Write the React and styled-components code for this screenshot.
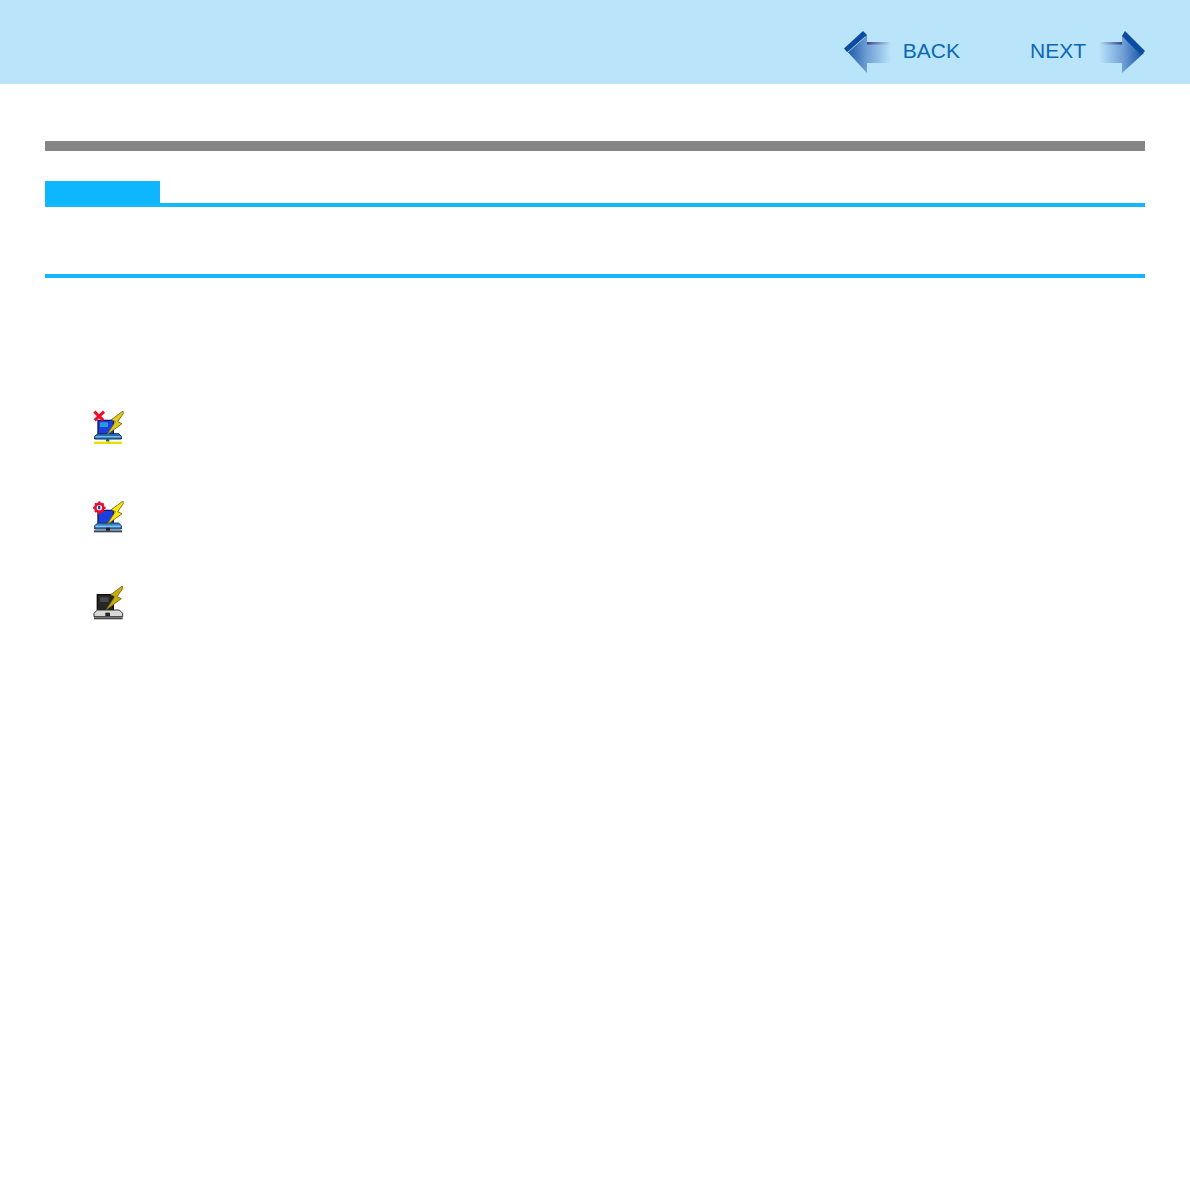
import styled, { createGlobalStyle } from 'styled-components';

const GlobalStyle = createGlobalStyle`
    html, body {
        margin: 0;
        padding: 0;
        background: #ffffff;
        font-family: 'Liberation Sans', Arial, sans-serif;
    }
`;

const Page = styled.div`
    width: 1190px;
    height: 1196px;
    overflow: hidden;
    background: #ffffff;
`;

const Header = styled.header`
    height: 84px;
    background: #bae4fa;
    display: flex;
    justify-content: flex-end;
    align-items: flex-start;
    padding: 31px 45px 0 0;
    box-sizing: border-box;
`;

const NavLink = styled.a`
    display: flex;
    align-items: flex-start;
    height: 43px;
    margin-left: ${(props) => props.$gap || 0}px;
    color: #0a69b5;
    font-size: 21px;
    line-height: 40px;
    cursor: pointer;
    svg {
        display: block;
    }
`;

const BackLabel = styled.span`
    margin-left: 12px;
`;

const NextLabel = styled.span`
    margin-right: 13px;
`;

const Content = styled.main`
    padding: 57px 45px 0;
`;

const TitleBar = styled.div`
    height: 10px;
    background: #858585;
`;

const NoteHead = styled.div`
    margin-top: 30px;
    height: 26px;
    box-sizing: border-box;
    border-bottom: 4px solid #14b7fb;
`;

const NoteTab = styled.div`
    width: 115px;
    height: 22px;
    background: #0db6ff;
`;

const NoteBody = styled.div`
    height: 71px;
    box-sizing: border-box;
    border-bottom: 4px solid #14b7fb;
`;

const IconList = styled.ul`
    list-style: none;
    margin: 132px 0 0;
    padding: 0 0 0 47px;
    display: flex;
    flex-direction: column;
    gap: 52px;
`;

const IconRow = styled.li`
    height: 36px;
    svg {
        display: block;
    }
`;

const BackArrow = () => (
    <svg width="47" height="43" viewBox="0 0 47 43">
        <defs>
            <linearGradient id="backFill" x1="0" x2="1" y1="0" y2="0">
                <stop offset="0" stopColor="#0e4fa3" />
                <stop offset="0.45" stopColor="#6a9ad2" />
                <stop offset="1" stopColor="#bae4fa" />
            </linearGradient>
            <linearGradient id="backEdge" x1="0" x2="1" y1="0" y2="0">
                <stop offset="0" stopColor="#3a3f8f" />
                <stop offset="1" stopColor="#bae4fa" />
            </linearGradient>
        </defs>
        <path d="M1 18 L23 4 L23 11 L47 11 L47 32 L23 32 L23 42 Z" fill="url(#backFill)" />
        <rect x="23" y="11" width="24" height="2.5" fill="url(#backEdge)" />
        <path d="M0 17.5 L19 0 L23 4 L3 21 Z" fill="#0b4ca2" />
        <path d="M4 21 L21 6" stroke="#d5e8f7" strokeWidth="0.7" />
    </svg>
);

const NextArrow = () => (
    <svg width="46" height="43" viewBox="0 0 46 43">
        <defs>
            <linearGradient id="nextFill" x1="0" x2="1" y1="0" y2="0">
                <stop offset="0" stopColor="#bae4fa" />
                <stop offset="0.55" stopColor="#6d9dd3" />
                <stop offset="1" stopColor="#0e4fa3" />
            </linearGradient>
            <linearGradient id="nextEdge" x1="0" x2="1" y1="0" y2="0">
                <stop offset="0" stopColor="#bae4fa" />
                <stop offset="1" stopColor="#3a3f8f" />
            </linearGradient>
        </defs>
        <path d="M0 11 L23 11 L23 4 L45 22 L23 42 L23 32 L0 32 Z" fill="url(#nextFill)" />
        <rect x="0" y="11" width="23" height="2.5" fill="url(#nextEdge)" />
        <path d="M26 0 L46 20 L42 24 L23 5 Z" fill="#0b4ca2" />
    </svg>
);

// laptop, lightning and status badge, drawn on a 3x grid then softened like the scaled bitmap
const Soft = ({ id, top, children }) => (
    <svg width="32" height="36" viewBox={`20 ${top} 96 108`}>
        <defs>
            <filter id={id} x="-10%" y="-10%" width="120%" height="120%">
                <feGaussianBlur stdDeviation="1.8" />
            </filter>
        </defs>
        <g filter={`url(#${id})`}>{children}</g>
    </svg>
);

const Bolt = ({ fill }) => (
    <path d="M113 18 L78 44 L90 50 L64 90 L110 56 L97 50 L114 26 Z" fill={fill} stroke="#6a6414" strokeWidth="2.5" />
);

const OffIcon = () => (
    <Soft id="softOff" top={15}>
        <path d="M38 46 H84 V86 H38 Z" fill="#1f3fe0" stroke="#15155c" strokeWidth="4" />
        <path d="M44 52 H68 V66 H44 Z" fill="#2a9ae0" />
        <path d="M28 94 L38 86 H100 L108 94 V102 H28 Z" fill="#1f6fc0" stroke="#0e2f66" strokeWidth="3" />
        <rect x="30" y="94" width="76" height="3" fill="#a8d8f0" />
        <rect x="62" y="102" width="10" height="8" fill="#1c6a5c" />
        <rect x="26" y="110" width="84" height="7" fill="#e6e000" />
        <path d="M27 20 L54 46 M56 20 L28 46" stroke="#f01028" strokeWidth="9" />
        <Bolt fill="#e0c81c" />
    </Soft>
);

const ChargingIcon = () => (
    <Soft id="softCharging" top={9}>
        <path d="M38 46 H84 V86 H38 Z" fill="#1f3fe0" stroke="#15155c" strokeWidth="4" />
        <path d="M28 92 L38 84 H100 L108 92 V102 H28 Z" fill="#2f7fc8" stroke="#123a66" strokeWidth="3" />
        <rect x="30" y="92" width="76" height="3" fill="#b6dcf0" />
        <rect x="62" y="98" width="12" height="10" fill="#222222" />
        <rect x="26" y="106" width="84" height="6" fill="#3d4a55" />
        <circle cx="42" cy="38" r="12" fill="#ffffff" stroke="#e8102a" strokeWidth="8" />
        <path d="M42 19 V25 M42 51 V57 M23 38 H29 M55 38 H61 M29 25 L33 29 M55 25 L51 29 M29 51 L33 47 M55 51 L51 47" stroke="#e8102a" strokeWidth="6" />
        <rect x="38" y="32" width="7" height="11" fill="#2b3fb0" />
        <Bolt fill="#ffe410" />
    </Soft>
);

const IdleIcon = () => (
    <Soft id="softIdle" top={12}>
        <path d="M36 38 H84 V82 H36 Z" fill="#262626" stroke="#111111" strokeWidth="4" />
        <path d="M44 46 H70 V60 H44 Z" fill="#4a4a4a" />
        <path d="M26 94 L36 84 H102 L112 94 V104 H26 Z" fill="#d8d8d8" stroke="#333333" strokeWidth="3" />
        <rect x="60" y="92" width="14" height="10" fill="#222222" />
        <rect x="26" y="106" width="86" height="6" fill="#4a4a4a" />
        <g transform="translate(-2 -6)">
            <Bolt fill="#c8ac10" />
        </g>
    </Soft>
);

const App = () => {
    return (
        <Page>
            <GlobalStyle />
            <Header>
                <NavLink>
                    <BackArrow />
                    <BackLabel>BACK</BackLabel>
                </NavLink>
                <NavLink $gap={70}>
                    <NextLabel>NEXT</NextLabel>
                    <NextArrow />
                </NavLink>
            </Header>
            <Content>
                <TitleBar />
                <NoteHead>
                    <NoteTab />
                </NoteHead>
                <NoteBody />
                <IconList>
                    <IconRow>
                        <OffIcon />
                    </IconRow>
                    <IconRow>
                        <ChargingIcon />
                    </IconRow>
                    <IconRow>
                        <IdleIcon />
                    </IconRow>
                </IconList>
            </Content>
        </Page>
    );
};

export default App;
